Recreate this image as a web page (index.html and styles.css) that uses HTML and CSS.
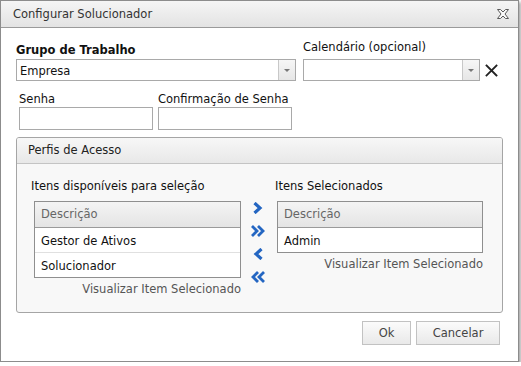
FILE: index.html
```html
<!DOCTYPE html>
<html lang="pt">
<head>
<meta charset="utf-8">
<title>Configurar Solucionador</title>
<link rel="stylesheet" href="styles.css">
</head>
<body>
<div class="window">
  <div class="titlebar">
    <span class="title">Configurar Solucionador</span>
    <svg class="close" width="12" height="10" viewBox="0 0 12 10"><path d="M0.5 0.5 H3.5 L6 3 L8.5 0.5 H11.5 L8 5 L11.5 9.5 H8.5 L6 7 L3.5 9.5 H0.5 L4 5 Z" fill="#fafafa" stroke="#5a5a5a" stroke-width="1" stroke-linejoin="round"/></svg>
  </div>
  <div class="content">
    <div class="row1">
      <div class="field grupo">
        <div class="lbl bold">Grupo de Trabalho</div>
        <div class="select">
          <span class="sel-text">Empresa</span>
          <span class="dd"><span class="tri"></span></span>
        </div>
      </div>
      <div class="field cal">
        <div class="lbl cal-lbl">Calendário (opcional)</div>
        <div class="select">
          <span class="sel-text"></span>
          <span class="dd"><span class="tri"></span></span>
        </div>
      </div>
      <svg class="clear" width="13" height="13" viewBox="0 0 13 13"><path d="M1.5 1.5 L11.5 11.5 M11.5 1.5 L1.5 11.5" stroke="#222" stroke-width="1.8" stroke-linecap="square"/></svg>
    </div>
    <div class="row2">
      <div class="field">
        <div class="lbl">Senha</div>
        <div class="input"></div>
      </div>
      <div class="field">
        <div class="lbl">Confirmação de Senha</div>
        <div class="input"></div>
      </div>
    </div>
    <div class="panel">
      <div class="panel-head">Perfis de Acesso</div>
      <div class="panel-body">
        <div class="col left">
          <div class="col-title">Itens disponíveis para seleção</div>
          <div class="grid">
            <div class="grid-head">Descrição</div>
            <div class="grid-row">Gestor de Ativos</div>
            <div class="grid-row">Solucionador</div>
          </div>
          <div class="link">Visualizar Item Selecionado</div>
        </div>
        <div class="arrows">
          <svg class="arr" width="16" height="12" viewBox="0 0 16 12"><path d="M4.5 1 L10 6 L4.5 11" fill="none" stroke="#2466c2" stroke-width="3.2"/></svg>
          <svg class="arr" width="16" height="12" viewBox="0 0 16 12"><path d="M2 1 L7 6 L2 11 M8 1 L13 6 L8 11" fill="none" stroke="#2466c2" stroke-width="2.8"/></svg>
          <svg class="arr" width="16" height="12" viewBox="0 0 16 12"><path d="M11.5 1 L6 6 L11.5 11" fill="none" stroke="#2466c2" stroke-width="3.2"/></svg>
          <svg class="arr" width="16" height="12" viewBox="0 0 16 12"><path d="M8 1 L3 6 L8 11 M14 1 L9 6 L14 11" fill="none" stroke="#2466c2" stroke-width="2.8"/></svg>
        </div>
        <div class="col right">
          <div class="col-title">Itens Selecionados</div>
          <div class="grid">
            <div class="grid-head">Descrição</div>
            <div class="grid-row">Admin</div>
          </div>
          <div class="link">Visualizar Item Selecionado</div>
        </div>
      </div>
    </div>
    <div class="buttons">
      <div class="btn ok">Ok</div>
      <div class="btn cancel">Cancelar</div>
    </div>
  </div>
</div>
</body>
</html>
```

FILE: styles.css
```css
* { box-sizing: border-box; }
html, body { margin: 0; padding: 0; background: #ffffff; }
body {
  font-family: Verdana, "DejaVu Sans", sans-serif;
  font-size: 11.5px;
  line-height: 13px;
  color: #222;
}
.window {
  width: 519px;
  height: 362px;
  border: 1px solid #8c8c8c;
  background: #fff;
  box-shadow: 2px 2px 3px rgba(0,0,0,0.35);
  display: flex;
  flex-direction: column;
}
.titlebar {
  height: 27px;
  flex: none;
  background: linear-gradient(#f5f5f5, #e3e3e3);
  border-bottom: 1px solid #9a9a9a;
  display: flex;
  align-items: center;
  justify-content: space-between;
  padding: 0 9px 0 12px;
}
.title { color: #333; }
.close { display: block; }
.content {
  padding: 13px 0 0 15px;
  display: flex;
  flex-direction: column;
}
.row1 {
  display: flex;
  align-items: flex-end;
}
.field { display: flex; flex-direction: column; }
.lbl { color: #111; }
.bold { font-weight: bold; margin-bottom: 2px; }
.cal-lbl { margin-bottom: 5px; }
.grupo { width: 280px; }
.cal { width: 177px; margin-left: 7px; }
.select {
  height: 22px;
  border: 1px solid #a9a9a9;
  display: flex;
  background: #fff;
}
.sel-text { flex: 1; padding: 5px 0 0 3px; color: #111; }
.dd {
  width: 17px;
  border-left: 1px solid #c8c8c8;
  background: linear-gradient(#f6f6f6, #e6e6e6);
  display: flex;
  align-items: center;
  justify-content: center;
}
.tri {
  width: 0; height: 0;
  border-left: 3px solid transparent;
  border-right: 3px solid transparent;
  border-top: 3px solid #777;
}
.clear { margin: 0 0 4px 5px; display: block; }
.row2 {
  display: flex;
  gap: 5px;
  margin: 12px 0 0 3px;
}
.row2 .lbl { margin-bottom: 1px; }
.input {
  width: 134px;
  height: 23px;
  border: 1px solid #a9a9a9;
  background: #fff;
}
.panel {
  margin-top: 7px;
  width: 487px;
  height: 176px;
  border: 1px solid #a5a5a5;
  border-radius: 3px;
  background: #f8f8f8;
  display: flex;
  flex-direction: column;
  overflow: hidden;
}
.panel-head {
  height: 26px;
  flex: none;
  background: linear-gradient(#f7f7f7, #e8e8e8);
  border-bottom: 1px solid #c4c4c4;
  padding: 6px 0 0 11px;
  color: #222;
}
.panel-body {
  display: flex;
  padding: 16px 0 0 14px;
}
.col { display: flex; flex-direction: column; }
.col-title { color: #111; margin-bottom: 8px; }
.left .grid { margin-left: 3px; width: 207px; }
.right .grid { margin-left: 2px; width: 206px; }
.grid {
  border: 1px solid #8f8f8f;
  background: #fff;
}
.grid-head {
  height: 26px;
  background: linear-gradient(#f4f4f4, #e4e4e4);
  border-bottom: 1px solid #9a9a9a;
  color: #666;
  padding: 6px 0 0 6px;
}
.grid-row {
  height: 25px;
  border-bottom: 1px solid #e0e0e0;
  padding: 7px 0 0 6px;
  color: #111;
}
.grid-row:last-child { border-bottom: none; height: 24px; }
.link {
  text-align: right;
  color: #555;
  margin-top: 5px;
}
.arrows {
  display: flex;
  flex-direction: column;
  gap: 11px;
  padding: 22px 0 0 9px;
  width: 34px;
}
.arr { display: block; }
.buttons {
  display: flex;
  justify-content: flex-end;
  gap: 5px;
  margin-top: 8px;
  padding-right: 18px;
}
.btn {
  height: 24px;
  border: 1px solid #c2c2c2;
  background: linear-gradient(#fbfbfb, #e9e9e9);
  display: flex;
  align-items: center;
  justify-content: center;
  color: #444;
}
.ok { width: 49px; }
.cancel { width: 84px; }
```
